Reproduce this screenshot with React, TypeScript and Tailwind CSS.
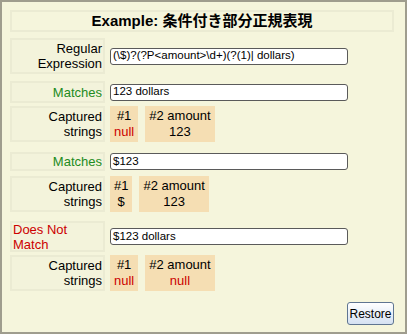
const font = {
  fontFamily: '"Liberation Sans", "Noto Sans CJK JP", sans-serif',
};

function Label({
  children,
  className = "",
}: {
  children: React.ReactNode;
  className?: string;
}) {
  return (
    <div
      className={`w-[95px] shrink-0 border-2 border-[#ebebd3] bg-[#f3f3db] text-[13px] leading-[15px] ${className}`}
    >
      {children}
    </div>
  );
}

function Field({ value }: { value: string }) {
  return (
    <div className="ml-[5px] flex h-[17px] w-[238px] items-center rounded-[3px] border border-[#5a5a5a] bg-white pl-[2px] text-[11.5px] text-black">
      {value}
    </div>
  );
}

function Cell({ top, bottom, red }: { top: string; bottom: string; red?: boolean }) {
  return (
    <div className="flex flex-col items-center justify-center bg-[#f5deb3] px-[4px] text-[13px] leading-[16px]">
      <span>{top}</span>
      <span className={red ? "text-[#cc0000]" : "text-black"}>{bottom}</span>
    </div>
  );
}

function Captured({ one, two }: { one: string; two: string }) {
  return (
    <div className="flex h-[36px]">
      <Label className="flex flex-col items-end justify-center pr-[1px]">
        <span>Captured</span>
        <span>strings</span>
      </Label>
      <div className="ml-[5px] flex gap-[7px]">
        <Cell top="#1" bottom={one} red={one === "null"} />
        <Cell top="#2 amount" bottom={two} red={two === "null"} />
      </div>
    </div>
  );
}

export default function App() {
  return (
    <div
      style={font}
      className="h-[334px] w-[407px] border-2 border-[#9f9d8e] bg-[#f5f5dc] px-[8px] pt-[8px] text-black"
    >
      <div className="flex h-[22px] w-[384px] items-center justify-center border-2 border-[#ebebd3] text-[15px] font-bold">
        Example: 条件付き部分正規表現
      </div>

      <div className="mt-[6px] flex h-[36px] items-center">
        <Label className="flex h-full flex-col items-end justify-center pr-[1px]">
          <span>Regular</span>
          <span>Expression</span>
        </Label>
        <Field value="(\$)?(?P<amount>\d+)(?(1)| dollars)" />
      </div>

      <div className="mt-[7px] flex h-[22px] items-center">
        <Label className="flex h-full items-center justify-end pr-[1px] text-[#228b22]">
          Matches
        </Label>
        <Field value="123 dollars" />
      </div>
      <div className="mt-[3px]">
        <Captured one="null" two="123" />
      </div>

      <div className="mt-[10px] flex h-[19px] items-center">
        <Label className="flex h-full items-center justify-end pr-[1px] text-[#228b22]">
          Matches
        </Label>
        <Field value="$123" />
      </div>
      <div className="mt-[5px]">
        <Captured one="$" two="123" />
      </div>

      <div className="mt-[9px] flex h-[31px] items-center">
        <Label className="flex h-full flex-col justify-center pl-[1px] text-[#cc0000]">
          <span>Does Not</span>
          <span>Match</span>
        </Label>
        <Field value="$123 dollars" />
      </div>
      <div className="mt-[3px]">
        <Captured one="null" two="null" />
      </div>

      <div className="mt-[11px] flex w-[384px] justify-end">
        <button className="h-[23px] w-[47px] rounded-[3px] border border-[#5f7591] bg-gradient-to-b from-white to-[#d5e1f2] text-[12px]">
          Restore
        </button>
      </div>
    </div>
  );
}
